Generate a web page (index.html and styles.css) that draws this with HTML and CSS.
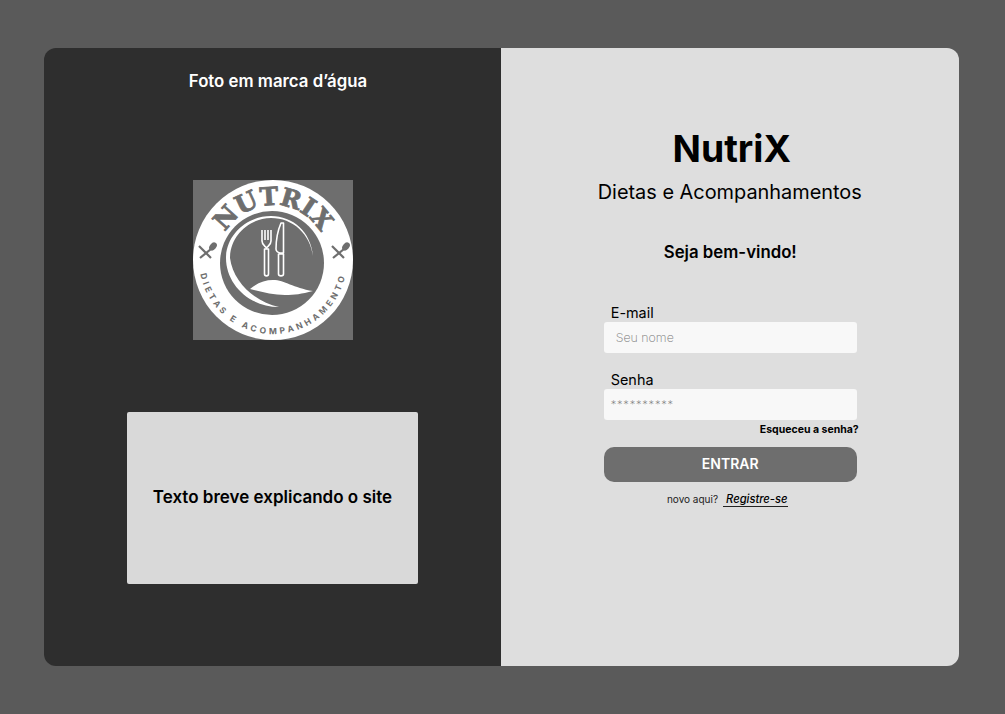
FILE: index.html
```html
<!DOCTYPE html>
<html lang="pt">
<head>
<meta charset="utf-8">
<title>NutriX</title>
<link rel="stylesheet" href="styles.css">
</head>
<body>
<main class="card">
  <section class="left">
    <h2 class="watermark">Foto em marca d’água</h2>
    <svg class="logo" width="160" height="160" viewBox="0 0 160 160" role="img" aria-label="NutriX">
      <defs>
        <path id="arcTop" d="M 25 80 A 55 55 0 0 1 135 80"/>
        <path id="arcBottom" d="M 11.4 52.3 A 74 74 0 1 0 148.6 52.3"/>
      </defs>
      <rect class="g" width="160" height="160"/>
      <circle class="w" cx="80" cy="80" r="80"/>
      <circle class="g" cx="79" cy="83" r="52"/>
      <path class="w" d="M 120 76 C 118 52 100 36 78 36 C 54 36 33 55 33 78 C 33 104 56 127 86 127 C 62 122 40 102 37 78 C 37 56 56 38 78 38 C 100 38 117 54 120 76 Z"/>
      <path class="w" d="M 57 109 C 64 103 72 100 80 100 C 92 100 100 108 120 111 C 108 114 102 115 92 115 C 80 115 68 112 57 109 Z"/>
      <g class="line">
        <path d="M 69 50 V 61 C 69 65 72 66 73.5 68 C 75 66 78 65 78 61 V 50 M 72 50 V 60 M 75 50 V 60 M 71.5 69 H 75.5 V 94 C 75.5 96.5 71.5 96.5 71.5 94 Z"/>
        <path d="M 88 43 C 85 50 83 58 83 69 C 83 71 85 73 87.5 73 H 90.5 V 43 Z M 85.5 74 H 90.5 V 94 C 90.5 96.5 85.5 96.5 85.5 94 Z"/>
      </g>
      <g class="cross">
        <path d="M 6 66 L 18 78"/>
        <path d="M 7 78 L 18 69"/>
        <path d="M 139 66 L 151 78"/>
        <path d="M 140 78 L 151 69"/>
      </g>
      <ellipse class="g" cx="20" cy="66.5" rx="3.2" ry="4.5" transform="rotate(40 20 66.5)"/>
      <ellipse class="g" cx="153" cy="66.5" rx="3.2" ry="4.5" transform="rotate(40 153 66.5)"/>
      <text class="logo-title"><textPath href="#arcTop" startOffset="50%" text-anchor="middle">NUTRIX</textPath></text>
      <text class="logo-sub"><textPath href="#arcBottom" startOffset="50%" text-anchor="middle">DIETAS E ACOMPANHAMENTO</textPath></text>
    </svg>
    <div class="about">Texto breve explicando o site</div>
  </section>
  <section class="right">
    <h1 class="brand">NutriX</h1>
    <p class="tagline">Dietas e Acompanhamentos</p>
    <h3 class="welcome">Seja bem-vindo!</h3>
    <form class="form">
      <label class="label" for="email">E-mail</label>
      <div class="input" id="email">Seu nome</div>
      <label class="label label-second" for="senha">Senha</label>
      <div class="input input-pass" id="senha">**********</div>
      <a class="forgot">Esqueceu a senha?</a>
      <div class="submit">ENTRAR</div>
      <p class="signup">novo aqui? <a class="register">Registre-se</a></p>
    </form>
  </section>
</main>
</body>
</html>
```

FILE: styles.css
```css
* { box-sizing: border-box; }
html, body { margin: 0; height: 100%; }
body {
  background: #5a5a5a;
  padding: 48px 46.5px 48px 44px;
  font-family: Inter, "Liberation Sans", sans-serif;
  color: #000;
  overflow: hidden;
}
.card {
  display: flex;
  height: 618px;
  border-radius: 12px;
  overflow: hidden;
}
.left {
  width: 457px;
  background: #2e2e2e;
  display: flex;
  flex-direction: column;
  align-items: center;
}
.watermark {
  margin: 23px 0 0 11px;
  font-size: 16.8px;
  line-height: 20px;
  font-weight: 600;
  color: #fff;
}
.logo { margin-top: 89px; display: block; }
.g { fill: #6e6e6e; }
.w { fill: #fff; }
.line { fill: none; stroke: #fff; stroke-width: 1.6; stroke-linejoin: round; }
.cross { fill: none; stroke: #6e6e6e; stroke-width: 2.2; }
.logo-title {
  fill: #6e6e6e;
  stroke: #6e6e6e;
  stroke-width: 0.8;
  font-family: "DejaVu Serif", serif;
  font-size: 25px;
  font-weight: 700;
}
.logo-sub {
  fill: #6e6e6e;
  font-family: Inter, sans-serif;
  font-size: 8.5px;
  font-weight: 700;
  letter-spacing: 3.3px;
}
.about {
  margin-top: 72px;
  width: 291px;
  height: 172px;
  background: #d9d9d9;
  border-radius: 2px;
  display: flex;
  align-items: center;
  justify-content: center;
  padding-bottom: 2px;
  font-size: 17px;
  font-weight: 600;
}
.right {
  flex: 1;
  background: #dedede;
  padding-left: 1px;
  display: flex;
  flex-direction: column;
  align-items: center;
}
.brand {
  margin: 78px 0 0 3px;
  font-size: 37.3px;
  line-height: 46px;
  font-weight: 700;
}
.tagline {
  margin: 8px 1px 0 0;
  font-size: 19.9px;
  line-height: 24px;
  font-weight: 400;
}
.welcome {
  margin: 37px 0 0;
  font-size: 16.8px;
  line-height: 22px;
  font-weight: 600;
}
.form {
  margin: 42px 0 0;
  width: 253px;
  display: flex;
  flex-direction: column;
}
.label {
  padding-left: 7px;
  font-size: 14.4px;
  line-height: 17px;
  margin-top: -1px;
  margin-bottom: 1px;
}
.label-second { margin-top: 18px; }
.input {
  height: 31px;
  background: #f8f8f8;
  border-radius: 3px;
  padding-left: 12px;
  font-size: 12.4px;
  font-weight: 200;
  line-height: 31px;
  color: #777;
}
.input-pass { padding-left: 7px; line-height: 33px; font-size: 11px; letter-spacing: 0.8px; }
.forgot {
  align-self: flex-end;
  margin-right: -2px;
  margin-top: 3px;
  font-size: 10.5px;
  line-height: 13px;
  font-weight: 700;
}
.submit {
  margin-top: 11px;
  height: 35px;
  border-radius: 10px;
  background: #6e6e6e;
  color: #fff;
  font-size: 14px;
  font-weight: 600;
  line-height: 33px;
  text-align: center;
}
.signup {
  margin: 11px 0 0;
  font-size: 10px;
  line-height: 13px;
  text-align: center;
  color: #222;
  display: flex;
  justify-content: center;
  gap: 5px;
  padding-right: 6px;
}
.register {
  padding-left: 3px;
  font-size: 11.2px;
  font-style: italic;
  font-weight: 500;
  color: #000;
  border-bottom: 1px solid #222;
}
```
